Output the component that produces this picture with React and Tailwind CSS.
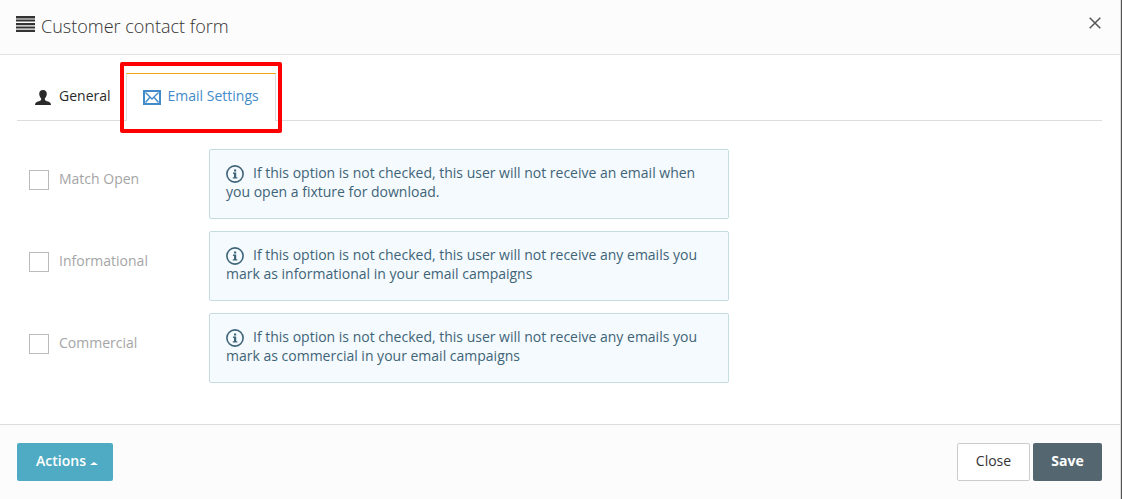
import { useState } from 'react'

const OPTIONS = [
  {
    id: 'match-open',
    label: 'Match Open',
    help: 'If this option is not checked, this user will not receive an email when you open a fixture for download.',
  },
  {
    id: 'informational',
    label: 'Informational',
    help: 'If this option is not checked, this user will not receive any emails you mark as informational in your email campaigns',
  },
  {
    id: 'commercial',
    label: 'Commercial',
    help: 'If this option is not checked, this user will not receive any emails you mark as commercial in your email campaigns',
  },
]

// --- ICONS ---

function ListIcon() {
  return (
    <svg className="w-[19px] h-4" viewBox="0 0 19 16" fill="#333" aria-hidden="true">
      <path d="M0 0h19v2.400H0zM0 3.600h19v2H0zM0 7h19v2.200H0zM0 10.400h19v2H0zM0 13.700h19v2.300H0z" />
    </svg>
  )
}

function UserIcon() {
  return (
    <svg className="w-4 h-[15px]" viewBox="0 0 16 15" fill="#2b2b2b" aria-hidden="true">
      <path d="M8 0c2.400 0 3.800 1.600 3.800 3.800 0 1.900-.8 3.500-1.900 4.500v1.500c.5 1 1.600 1.300 3.100 1.800 1.900.6 2.800 1.400 3 3.400H0c.2-2 1.100-2.800 3-3.400 1.500-.5 2.600-.8 3.100-1.800V8.300C5 7.300 4.200 5.700 4.200 3.800 4.200 1.600 5.600 0 8 0z" />
    </svg>
  )
}

function MailIcon() {
  return (
    <svg className="w-[18px] h-[15px]" viewBox="0 0 18 15" fill="none" stroke="#428bca" aria-hidden="true">
      <rect x="1" y="1" width="16" height="13" strokeWidth="2" />
      <path d="M2.500 2.500L9 9l6.500-6.500M2.500 12.500l4.300-5M15.500 12.500l-4.300-5" strokeWidth="1.400" />
    </svg>
  )
}

function InfoIcon() {
  return (
    <svg className="-my-1 mr-[9px] inline-block size-[18px]" viewBox="0 0 18 18" fill="none" aria-hidden="true">
      <circle cx="9" cy="9" r="8.100" stroke="#3f6478" strokeWidth="1.600" />
      <path d="M8 4.500h2.200v2H8zM7 7.600h3.200v4.600h1.100v1.300H6.800v-1.300H8V8.900H7z" fill="#3f6478" />
    </svg>
  )
}

function OptionRow({ option, checked, onChange }) {
  return (
    <div className="flex items-start">
      <div className="flex w-48 shrink-0 items-center gap-[10px] pl-3 pt-5">
        <input
          id={option.id}
          type="checkbox"
          checked={checked}
          onChange={onChange}
          className="size-5 appearance-none border border-[#bbb] bg-white checked:bg-[#4fabc3]"
        />
        <label htmlFor={option.id} className="pb-0.5 text-sm text-[#a5a5a5]">{option.label}</label>
      </div>
      <p className="min-h-[70px] w-full max-w-[520px] rounded-xs border border-[#c5dde2] bg-[#f4fafd] px-4 pt-[13px] text-sm leading-[19px] font-medium text-[#3f6478]">
        <InfoIcon />
        {option.help}
      </p>
    </div>
  )
}

export default function App() {
  const [checked, setChecked] = useState({})

  const toggle = (id) => setChecked((prev) => ({ ...prev, [id]: !prev[id] }))

  return (
    <div className="min-h-screen border-r border-[#555] bg-white font-['Open_Sans',sans-serif] text-[#333]">
      <div className="flex min-h-screen flex-col border-r border-[#ddd]">
        <header className="flex h-[55px] shrink-0 items-start justify-between border-b border-[#e2e2e2] bg-[#fcfcfc] px-4">
          <h1 className="flex items-start gap-[6px] pt-4 text-lg leading-5 font-light">
            <ListIcon />
            Customer contact form
          </h1>
          <button type="button" aria-label="Close dialog" className="mt-4 mr-[2px] p-px">
            <svg className="size-3" viewBox="0 0 12 12" stroke="#555" strokeWidth="1.500" aria-hidden="true">
              <path d="M.7.7l10.600 10.600M11.300.7L.7 11.300" />
            </svg>
          </button>
        </header>

        <main className="grow pl-[17px] pr-[18px] pt-[18px] pb-[41px]">
          <nav className="flex h-12 border-b border-[#ddd] text-sm font-medium">
            <a href="#general" className="flex h-12 items-center gap-2 pl-[18px] pr-4 text-[#2b2b2b]">
              <UserIcon />
              <span className="pb-0.5">General</span>
            </a>
            {/* Highlight frame sits around the active tab */}
            <a href="#email" aria-current="page" className="relative -ml-px flex h-12 items-center gap-[7px] border border-b-0 border-[#ddd] border-t-[#f0a30a] bg-white px-4 text-[#428bca]">
              <MailIcon />
              <span className="pb-[3px]">Email Settings</span>
              <span className="pointer-events-none absolute -inset-x-[7px] -top-3 -bottom-3 rounded-xs border-4 border-[#fe0000]" />
            </a>
          </nav>

          <form className="flex flex-col gap-3 pt-7">
            {OPTIONS.map((option) => (
              <OptionRow
                key={option.id}
                option={option}
                checked={!!checked[option.id]}
                onChange={() => toggle(option.id)}
              />
            ))}
          </form>
        </main>

        <footer className="flex shrink-0 items-center justify-between border-t border-[#ddd] bg-[#fcfcfc] pl-[17px] pr-[18px] py-[18px] text-sm">
          <button type="button" className="flex h-[38px] w-24 items-center justify-center gap-1 rounded-xs bg-[#4fabc3] pb-0.5 pl-1 font-semibold text-white">
            Actions
            <svg className="mt-1 h-[3px] w-2" viewBox="0 0 8 3" fill="#fff" aria-hidden="true">
              <path d="M0 3l4-3 4 3z" />
            </svg>
          </button>
          <div className="flex gap-[3px]">
            <button type="button" className="h-[38px] w-[73px] rounded-xs border border-[#ccc] bg-white pb-0.5 font-medium text-[#333]">Close</button>
            <button type="button" className="h-[38px] w-[69px] rounded-xs bg-[#546670] pb-0.5 font-bold text-white">Save</button>
          </div>
        </footer>
      </div>
    </div>
  )
}
